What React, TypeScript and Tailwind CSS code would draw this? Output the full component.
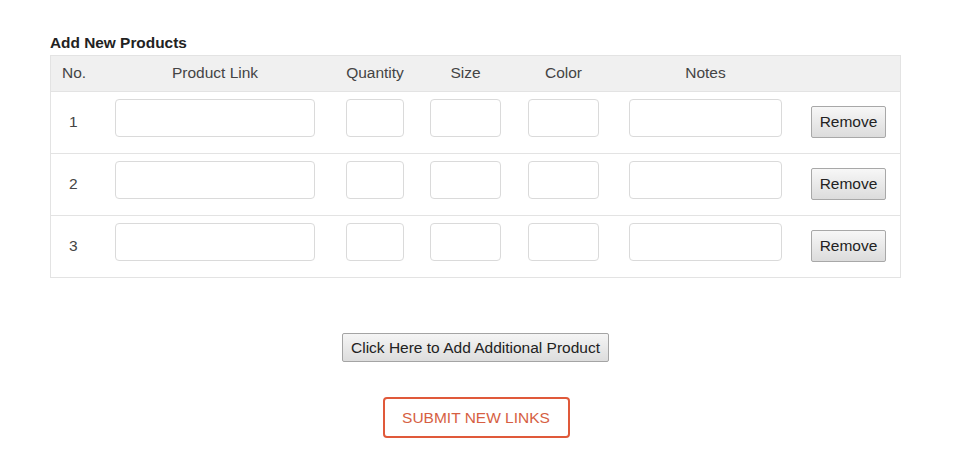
import React from "react";

const cols = [
  { label: "Product Link", w: "w-[200px]", ml: "ml-0" },
  { label: "Quantity", w: "w-[58px]", ml: "ml-[31px]" },
  { label: "Size", w: "w-[71px]", ml: "ml-[26px]" },
  { label: "Color", w: "w-[71px]", ml: "ml-[27px]" },
  { label: "Notes", w: "w-[153px]", ml: "ml-[30px]" },
];

export default function App() {
  const rows = [1, 2, 3];
  return (
    <div
      className="min-h-[462px] w-full bg-white text-[#333]"
      style={{ fontFamily: '"Liberation Sans", Arial, sans-serif' }}
    >
      <div className="pl-[50px] pt-[33px]">
        <div className="text-[15.4px] font-bold leading-[20px] text-[#222] mb-[2px]">Add New Products</div>
        <div className="w-[851px] border-x border-t border-[#e3e3e3]">
          <div className="flex h-[36px] items-center pb-[2px] border-b border-[#e3e3e3] bg-[#f0f0f0] text-[15.5px] text-[#444]">
            <div className="w-[64px] pl-[11px]">No.</div>
            {cols.map((c) => (
              <div key={c.label} className={`${c.w} ${c.ml} text-center whitespace-nowrap`}>
                {c.label}
              </div>
            ))}
          </div>
          {rows.map((n) => (
            <div key={n} className="flex h-[62px] items-start border-b border-[#e3e3e3]">
              <div className="w-[64px] pl-[18px] mt-[20px] text-[15.5px] leading-[20px] text-[#444]">{n}</div>
              {cols.map((c) => (
                <div
                  key={c.label}
                  className={`${c.w} ${c.ml} mt-[7px] h-[38px] rounded-[4px] border border-[#dadada] bg-white`}
                />
              ))}
              <button className="ml-[29px] mt-[14px] h-[32px] w-[75px] rounded-[2px] border border-[#a8a8a8] bg-gradient-to-b from-[#f7f7f7] to-[#dcdcdc] text-[15.5px] text-[#222]">
                Remove
              </button>
            </div>
          ))}
        </div>
      </div>
      <div className="flex flex-col items-center pt-[55px]">
        <button className="ml-[-2px] h-[29px] rounded-[2px] border border-[#a4a4a4] bg-gradient-to-b from-[#f5f5f5] to-[#dddddd] px-[8px] text-[15.5px] text-[#222] whitespace-nowrap">
          Click Here to Add Additional Product
        </button>
        <button className="mt-[35px] ml-[-1px] h-[41px] w-[187px] rounded-[4px] border-2 border-[#e0593a] bg-white text-[15.5px] text-[#d65f43]">
          SUBMIT NEW LINKS
        </button>
      </div>
    </div>
  );
}
